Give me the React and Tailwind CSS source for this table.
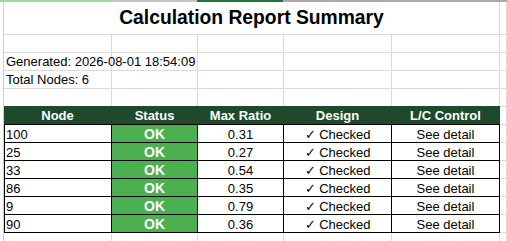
import React from 'react';

const GRID = 'grid grid-cols-[108px_86px_86px_108px_108px_1fr]';
const rows = [
  { node: '100', ratio: '0.31' },
  { node: '25', ratio: '0.27' },
  { node: '33', ratio: '0.54' },
  { node: '86', ratio: '0.35' },
  { node: '9', ratio: '0.79' },
  { node: '90', ratio: '0.36' },
];

function EmptyRow({ h = 'h-[18px]', bottom = true }) {
  const b = bottom ? 'border-b' : '';
  return (
    <div className={GRID}>
      {[0, 1, 2, 3, 4, 5].map((i) => (
        <div key={i} className={`${h} border-r ${b} border-[#dadada]`}></div>
      ))}
    </div>
  );
}

export default function App() {
  return (
    <div className="w-[507px] h-[241px] overflow-hidden bg-white font-['Liberation_Sans',Arial,sans-serif] text-[13px] text-black">
      {/* column header strip */}
      <div className="flex h-[2px]">
        <div className="w-[111px] bg-[#9fd4b0]"></div>
        <div className="w-[86px] bg-[#c4c4c4]"></div>
        <div className="w-[86px] bg-[#217346]"></div>
        <div className="flex-1 bg-[#ababab]"></div>
      </div>

      <div className="ml-[3px] border-l border-[#d0d0d0]">
        {/* title */}
        <div className="grid grid-cols-[496px_1fr]">
          <div className="h-[33px] border-r border-b border-[#dadada] flex items-end justify-center pb-[5px]">
            <span className="text-[19.3px] font-bold leading-[22px]">Calculation Report Summary</span>
          </div>
          <div className="h-[33px] border-r border-b border-[#dadada]"></div>
        </div>

        <EmptyRow />
        <div className={GRID}>
          <div className="h-[18px] border-r border-b border-[#dadada] flex items-end pb-[1px] pl-[2px] leading-[15px] whitespace-nowrap overflow-visible relative z-10">
            Generated: 2026-08-01 18:54:09
          </div>
          <div className="h-[18px] border-r border-b border-[#dadada]"></div>
          <div className="h-[18px] border-r border-b border-[#dadada]"></div>
          <div className="h-[18px] border-r border-b border-[#dadada]"></div>
          <div className="h-[18px] border-r border-b border-[#dadada]"></div>
          <div className="h-[18px] border-r border-b border-[#dadada]"></div>
        </div>
        <div className={GRID}>
          <div className="h-[18px] border-r border-b border-[#dadada] flex items-end pb-[1px] pl-[2px] leading-[15px] whitespace-nowrap">
            Total Nodes: 6
          </div>
          <div className="h-[18px] border-r border-b border-[#dadada]"></div>
          <div className="h-[18px] border-r border-b border-[#dadada]"></div>
          <div className="h-[18px] border-r border-b border-[#dadada]"></div>
          <div className="h-[18px] border-r border-b border-[#dadada]"></div>
          <div className="h-[18px] border-r border-b border-[#dadada]"></div>
        </div>
        <EmptyRow h="h-[17px]" bottom={false} />

        {/* header */}
        <div className={GRID}>
          {['Node', 'Status', 'Max Ratio', 'Design', 'L/C Control'].map((t) => (
            <div
              key={t}
              className="h-[18px] border-t border-r border-[#1e4a2b] bg-[#1e4a2b] text-white font-bold flex items-end justify-center pb-[1px] leading-[15px] whitespace-nowrap"
            >
              {t}
            </div>
          ))}
          <div className="h-[18px] border-t border-r border-[#dadada]"></div>
        </div>

        {/* data */}
        {rows.map((r, i) => {
          const last = i === rows.length - 1;
          const h = last ? 'h-[19px] border-b' : 'h-[18px]';
          const cell = `${h} border-t border-r border-black flex items-end leading-[15px] whitespace-nowrap`;
          return (
            <div key={r.node} className={GRID}>
              <div className={`${cell} pl-[2px] shadow-[inset_1px_0_0_#000]`}>{r.node}</div>
              <div className={`${cell} justify-center bg-[#4caf50] text-white font-bold text-[14px]`}>OK</div>
              <div className={`${cell} justify-center`}>{r.ratio}</div>
              <div className={`${cell} justify-center`}>✓ Checked</div>
              <div className={`${cell} justify-center`}>See detail</div>
              <div className={`${h} border-t border-r border-[#dadada]`}></div>
            </div>
          );
        })}

        <EmptyRow />
      </div>
    </div>
  );
}
